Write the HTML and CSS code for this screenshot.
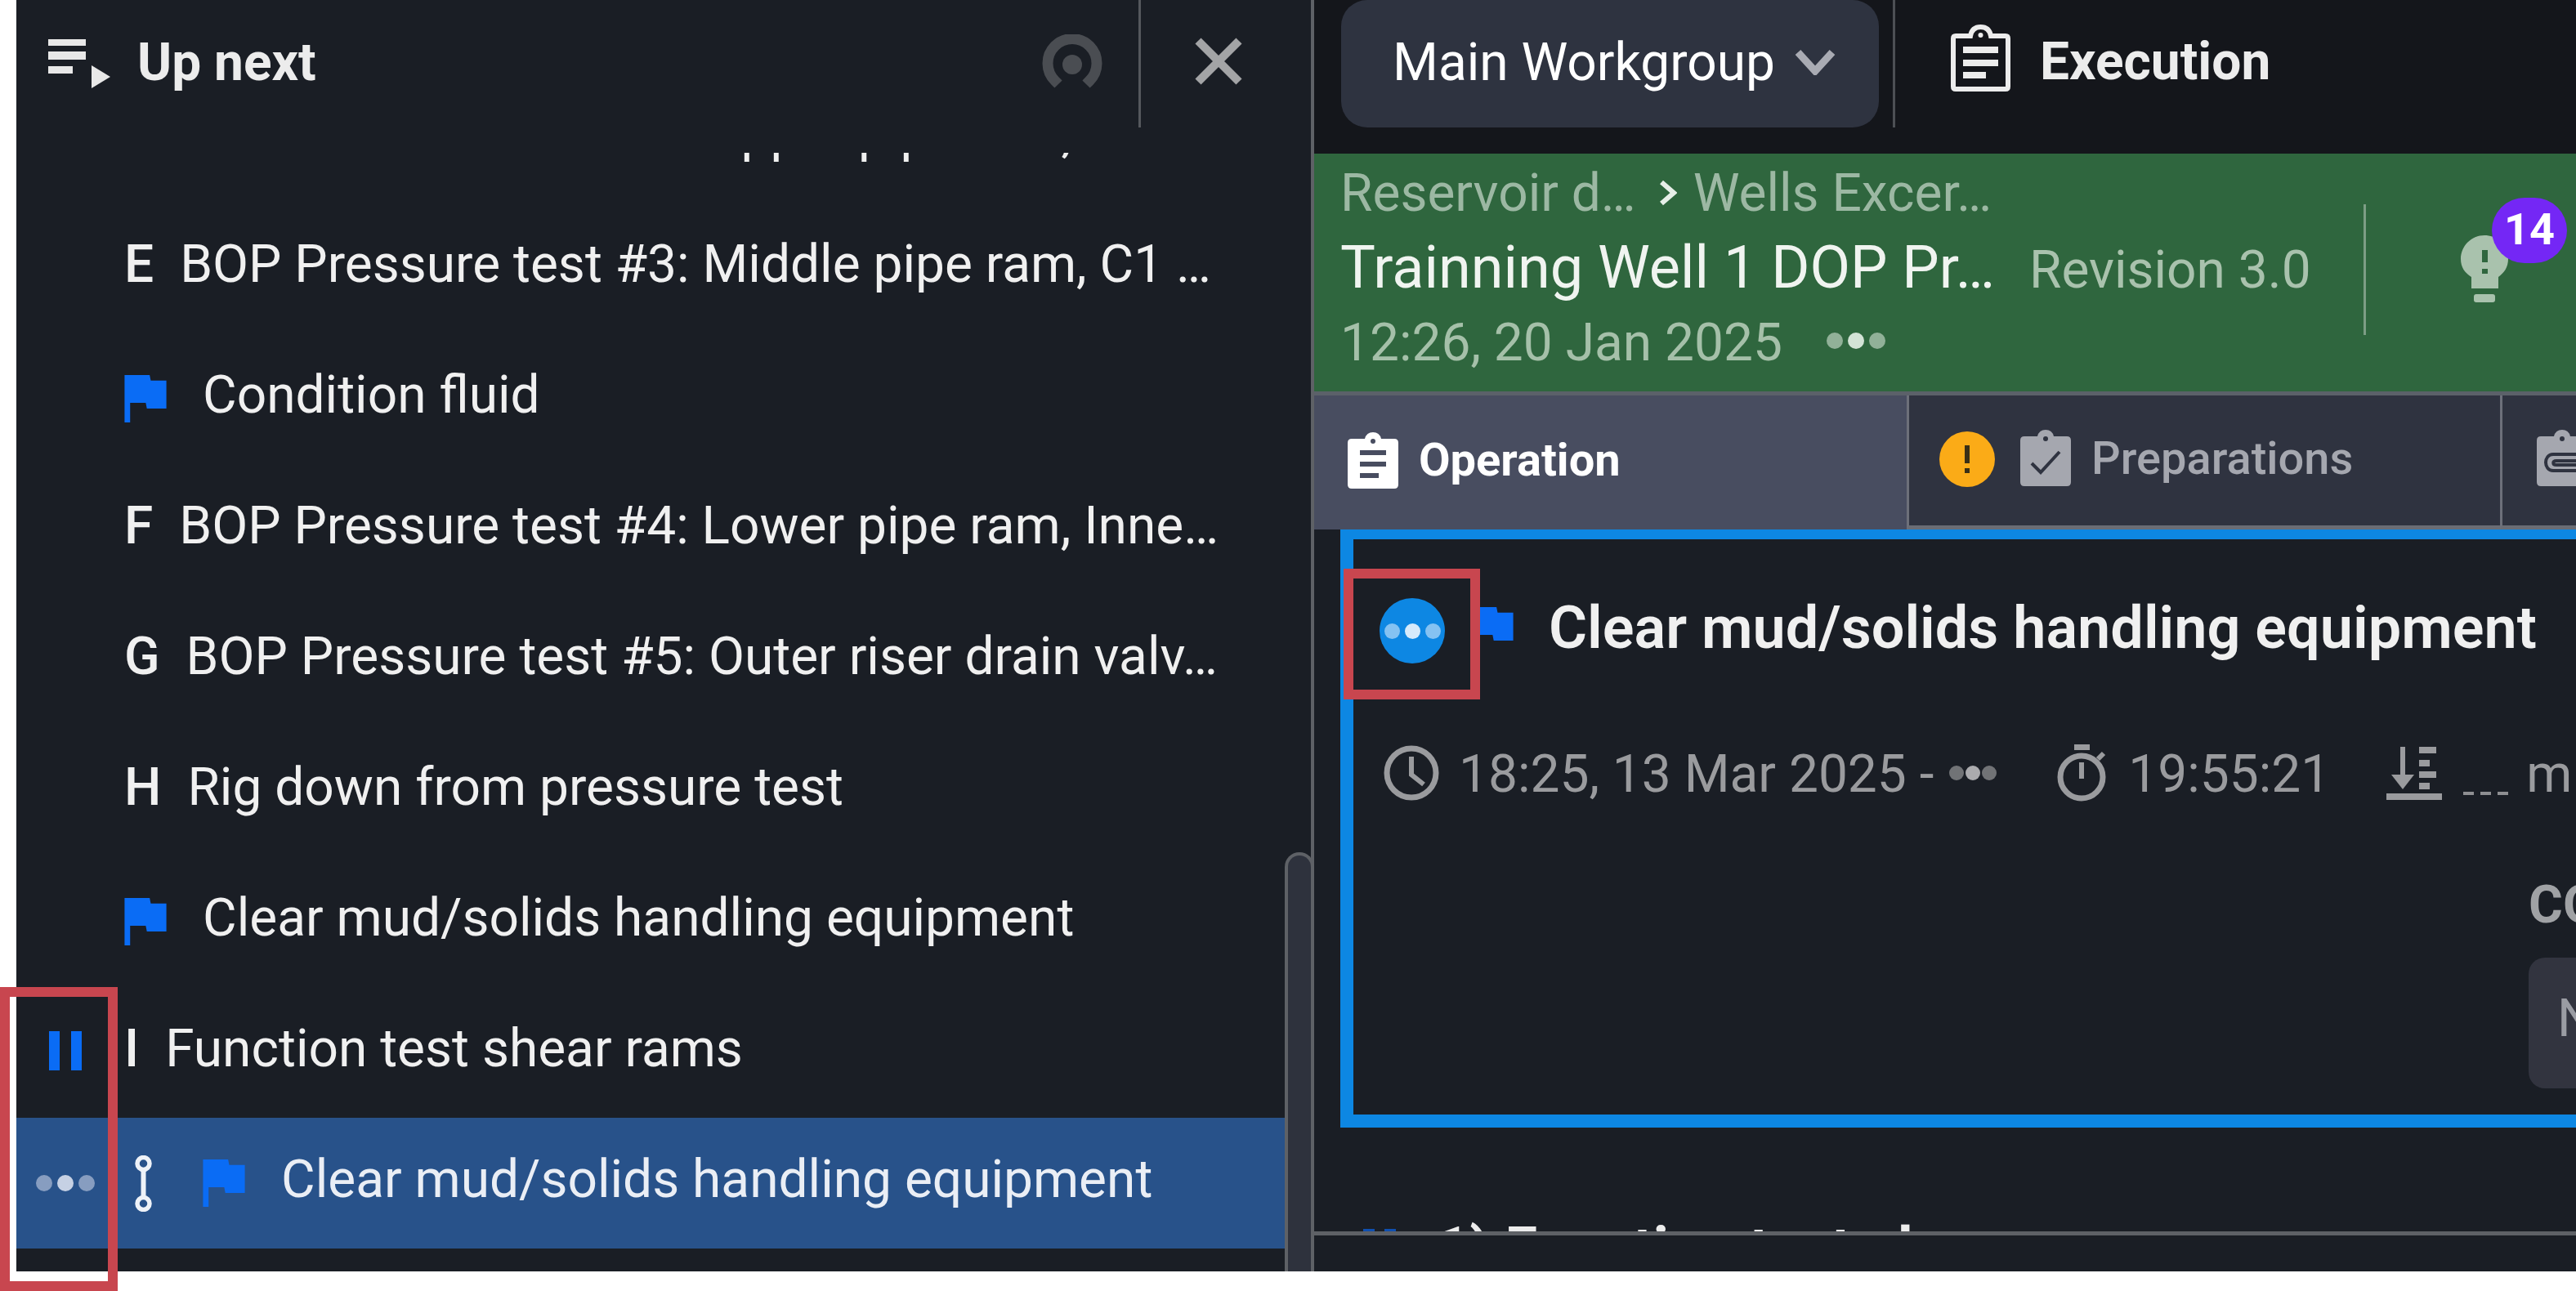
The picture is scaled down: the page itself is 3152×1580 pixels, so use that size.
FILE: index.html
```html
<!DOCTYPE html>
<html lang="en">
<head>
  <meta charset="UTF-8">
  <title>Up next - Execution</title>
  <link rel="stylesheet" href="styles.css">
</head>
<body>
  <div class="page">
    <aside class="queue">
      <div class="queue-head">
        <svg class="icon-queue" viewBox="0 0 76 60"><rect x="0" y="0" width="46" height="8" fill="#e8e8e8"/><rect x="0" y="15" width="46" height="10" fill="#e8e8e8"/><rect x="0" y="33" width="30" height="9" fill="#e8e8e8"/><path d="M53 32 L76 46 L53 60 Z" fill="#e8e8e8"/></svg>
        <span class="queue-title">Up next</span>
        <svg class="icon-radar" viewBox="0 0 74 66"><path d="M20 61 L16 57 A30 30 0 1 1 58 57 L54 61" fill="none" stroke="#4a4d52" stroke-width="13"/><circle cx="37" cy="37" r="12" fill="#4a4d52"/></svg>
        <div class="queue-close">
          <svg class="icon-close" viewBox="0 0 58 58"><path d="M4 4 L54 54 M54 4 L4 54" stroke="#a3a4a6" stroke-width="10"/></svg>
        </div>
      </div>

      <div class="queue-list">
        <div class="row"><div class="gutter"></div><span class="row-letter">D</span><span class="row-text">BOP Pressure test #2: Upper pipe ram, …</span></div>
        <div class="row"><div class="gutter"></div><span class="row-letter">E</span><span class="row-text">BOP Pressure test #3: Middle pipe ram, C1 …</span></div>
        <div class="row"><div class="gutter"></div><svg class="flag flag-row" viewBox="5 4 15 17"><path d="M14.4 6L14 4H5v17h2v-7h5.6l.4 2h7V6z"/></svg><span class="row-text">Condition fluid</span></div>
        <div class="row"><div class="gutter"></div><span class="row-letter">F</span><span class="row-text">BOP Pressure test #4: Lower pipe ram, Inne…</span></div>
        <div class="row"><div class="gutter"></div><span class="row-letter">G</span><span class="row-text">BOP Pressure test #5: Outer riser drain valv…</span></div>
        <div class="row"><div class="gutter"></div><span class="row-letter">H</span><span class="row-text">Rig down from pressure test</span></div>
        <div class="row"><div class="gutter"></div><svg class="flag flag-row" viewBox="5 4 15 17"><path d="M14.4 6L14 4H5v17h2v-7h5.6l.4 2h7V6z"/></svg><span class="row-text">Clear mud/solids handling equipment</span></div>
        <div class="row">
          <div class="gutter"><div class="pause"><i></i><i></i></div></div>
          <span class="row-letter">I</span><span class="row-text">Function test shear rams</span>
        </div>
        <div class="row row-active">
          <div class="gutter"><div class="dots dots-row"><i></i><i></i><i></i></div></div>
          <svg class="icon-link" viewBox="0 0 21 69"><circle cx="10.5" cy="10" r="7.5" fill="none" stroke="#eef2f8" stroke-width="5.5"/><circle cx="10.5" cy="59" r="7.5" fill="none" stroke="#eef2f8" stroke-width="5.5"/><path d="M10.5 18 V51" stroke="#eef2f8" stroke-width="6"/></svg>
          <svg class="flag flag-active" viewBox="5 4 15 17"><path d="M14.4 6L14 4H5v17h2v-7h5.6l.4 2h7V6z"/></svg>
          <span class="row-text">Clear mud/solids handling equipment</span>
        </div>
      </div>
      <div class="scrollbar"></div>
    </aside>

    <main class="main">
      <div class="topbar">
        <div class="chip">
          <span class="chip-label">Main Workgroup</span>
          <svg class="icon-chevron" viewBox="0 0 50 32"><path d="M4 4 L25 27 L46 4" fill="none" stroke="#a9abb3" stroke-width="9"/></svg>
        </div>
        <div class="topbar-sep"></div>
        <svg class="icon-exec" viewBox="0 0 73 82"><path d="M6 14 H24 Q26 3 36.5 3 Q47 3 49 14 H67 Q70 14 70 17 V76 Q70 79 67 79 H6 Q3 79 3 76 V17 Q3 14 6 14 Z" fill="#14161b" stroke="#ececec" stroke-width="6"/><circle cx="36.5" cy="13" r="3" fill="#ececec"/><rect x="15" y="27" width="43" height="8" fill="#ececec"/><rect x="15" y="43" width="43" height="8" fill="#ececec"/><rect x="15" y="58" width="28" height="8" fill="#ececec"/></svg>
        <span class="topbar-title">Execution</span>
      </div>

      <div class="band">
        <div class="band-info">
          <div class="crumbs">
            <span>Reservoir d…</span>
            <svg class="icon-crumb" viewBox="0 0 22 32"><path d="M3 3 L18 16 L3 29" fill="none" stroke="#e7efe8" stroke-width="6"/></svg>
            <span>Wells Excer…</span>
          </div>
          <div class="band-title">
            <span class="title-text">Trainning Well 1 DOP Pr…</span>
            <span class="revision">Revision 3.0</span>
          </div>
          <div class="band-date">
            <span>12:26, 20 Jan 2025</span>
            <div class="dots dots-band"><i></i><i></i><i></i></div>
          </div>
        </div>
        <div class="band-side">
          <svg class="icon-bulb" viewBox="0 0 58 82"><path d="M29 0 C45 0 58 13 58 29 C58 39 53 46 46 51 V65 H13 V51 C5 46 0 39 0 29 C0 13 13 0 29 0 Z" fill="#a9c2ad"/><rect x="26" y="18" width="7" height="15" fill="#2f663e"/><rect x="26" y="41" width="7" height="6" fill="#2f663e"/><rect x="16" y="72" width="26" height="10" rx="3" fill="#a9c2ad"/></svg>
          <span class="badge">14</span>
        </div>
      </div>

      <div class="tabs">
        <div class="tab tab-active">
          <svg class="icon-tab" viewBox="0 0 62 69"><path d="M5 8 H21 Q23 0 31 0 Q39 0 41 8 H57 Q62 8 62 13 V64 Q62 69 57 69 H5 Q0 69 0 64 V13 Q0 8 5 8 Z" fill="#fff"/><circle cx="31" cy="11" r="3" fill="#484d60"/><rect x="15" y="22" width="32" height="6" fill="#484d60"/><rect x="15" y="36" width="32" height="6" fill="#484d60"/><rect x="15" y="50" width="23" height="6" fill="#484d60"/></svg>
          <span class="tab-label">Operation</span>
        </div>
        <div class="tab tab-prep">
          <svg class="icon-warn" viewBox="0 0 68 68"><circle cx="34" cy="34" r="34" fill="#fbab17"/><rect x="31" y="17" width="6" height="22" fill="#3a2f16"/><rect x="31" y="45" width="6" height="6" fill="#3a2f16"/></svg>
          <svg class="icon-tab" viewBox="0 0 62 69"><path d="M5 8 H21 Q23 0 31 0 Q39 0 41 8 H57 Q62 8 62 13 V64 Q62 69 57 69 H5 Q0 69 0 64 V13 Q0 8 5 8 Z" fill="#a5a7af"/><circle cx="31" cy="11" r="3" fill="#2f3340"/><path d="M14 41 L25 52 L48 27" fill="none" stroke="#2f3340" stroke-width="4"/></svg>
          <span class="tab-label">Preparations</span>
        </div>
        <div class="tab tab-clip">
          <svg class="icon-tab" viewBox="0 0 62 69"><path d="M5 8 H21 Q23 0 31 0 Q39 0 41 8 H57 Q62 8 62 13 V64 Q62 69 57 69 H5 Q0 69 0 64 V13 Q0 8 5 8 Z" fill="#a5a7af"/><circle cx="31" cy="11" r="3" fill="#2f3340"/><path d="M54 30 H20 C8 30 8 50 20 50 H50 C58 50 58 38 50 38 H24 C19 38 19 43 24 43 H48" fill="none" stroke="#2f3340" stroke-width="4"/></svg>
        </div>
      </div>

      <section class="op-box">
        <div class="op-head">
          <div class="op-status"><div class="dots dots-status"><i></i><i></i><i></i></div></div>
          <svg class="flag flag-op" viewBox="5 4 15 17"><path d="M14.4 6L14 4H5v17h2v-7h5.6l.4 2h7V6z"/></svg>
          <h2 class="op-title">Clear mud/solids handling equipment</h2>
        </div>
        <div class="op-meta">
          <svg class="icon-clock" viewBox="0 0 68 68"><circle cx="34" cy="34" r="30" fill="none" stroke="#9a9b9e" stroke-width="7"/><path d="M34 14 V36 L49 48" fill="none" stroke="#9a9b9e" stroke-width="6"/></svg>
          <span class="meta-time">18:25, 13 Mar 2025 -</span>
          <div class="dots dots-meta"><i></i><i></i><i></i></div>
          <svg class="icon-timer" viewBox="0 0 63 70"><rect x="22" y="0" width="19" height="7" fill="#9a9b9e"/><circle cx="31" cy="40" r="26" fill="none" stroke="#9a9b9e" stroke-width="7"/><rect x="28" y="22" width="6" height="20" fill="#9a9b9e"/><path d="M51 18 L58 11" stroke="#9a9b9e" stroke-width="6"/></svg>
          <span class="meta-duration">19:55:21</span>
          <svg class="icon-depth" viewBox="0 0 68 65"><rect x="0" y="57" width="68" height="8" fill="#9a9b9e"/><path d="M20 0 V38" stroke="#9a9b9e" stroke-width="6"/><path d="M6 34 H34 L20 52 Z" fill="#9a9b9e"/><rect x="40" y="0" width="21" height="8" fill="#9a9b9e"/><rect x="40" y="16" width="13" height="8" fill="#9a9b9e"/><rect x="40" y="30" width="21" height="8" fill="#9a9b9e"/><rect x="40" y="44" width="13" height="8" fill="#9a9b9e"/></svg>
          <svg class="icon-dashes" viewBox="0 0 55 4"><rect x="0" y="0" width="13" height="4" fill="#8e8f92"/><rect x="21" y="0" width="13" height="4" fill="#8e8f92"/><rect x="42" y="0" width="13" height="4" fill="#8e8f92"/></svg>
          <span class="meta-unit">m</span>
        </div>
        <div class="op-form">
          <div class="form-label">COMMENT</div>
          <div class="form-input">No comment</div>
        </div>
      </section>

      <div class="next-step">
        <svg class="icon-next" viewBox="0 0 40 12"><rect x="0" y="9" width="14" height="3" fill="#0f4fb0"/><rect x="26" y="9" width="14" height="3" fill="#0f4fb0"/></svg>
        <span class="next-title">1) Function test al</span>
      </div>
    </main>

    <div class="mark mark-queue"></div>
    <div class="mark mark-status"></div>
  </div>
</body>
</html>
```

FILE: styles.css
```css
* { box-sizing: border-box; }
html, body { margin: 0; padding: 0; background: #fff; }
body { font-family: Roboto, "Liberation Sans", sans-serif; overflow: hidden; }
svg { display: block; flex-shrink: 0; }

.page {
  position: relative;
  display: flex;
  width: 3152px;
  height: 1580px;
  padding: 0 0 24px 20px;
}

/* left column */
.queue {
  position: relative;
  display: flex;
  flex-direction: column;
  width: 1584px;
  flex-shrink: 0;
  background: #1a1e25;
}
.queue-head {
  display: flex;
  align-items: center;
  height: 156px;
  flex-shrink: 0;
  padding-left: 39px;
}
.icon-queue { width: 76px; height: 60px; }
.queue-title {
  margin-left: 33px;
  padding-bottom: 4px;
  font-size: 64px;
  font-weight: 700;
  color: #ececec;
}
.icon-radar { width: 74px; height: 66px; margin-left: auto; margin-top: -6px; }
.queue-close {
  display: flex;
  align-items: center;
  width: 211px;
  height: 156px;
  margin-left: 44px;
  padding-left: 66px;
  border-left: 3px solid #55585d;
}
.icon-close { width: 58px; height: 58px; margin-top: -6px; }

.queue-list {
  display: flex;
  flex-direction: column;
  justify-content: flex-end;
  flex: 1;
  min-height: 0;
  margin-top: 31px;
  padding: 0 32px 28px 0;
  overflow: hidden;
}
.row {
  display: flex;
  align-items: center;
  height: 160px;
  flex-shrink: 0;
  font-size: 64px;
  color: #f0f0f0;
  white-space: nowrap;
}
.gutter {
  display: flex;
  align-items: center;
  justify-content: center;
  width: 120px;
  flex-shrink: 0;
  margin-right: 12px;
}
.row-letter { font-weight: 500; margin-right: 32px; padding-bottom: 10px; }
.row-text { padding-bottom: 10px; }
.row-active { background: #28528a; color: #eaeef5; }
.flag { fill: #0a6cf5; width: 52px; height: 58px; }
.flag-row { margin-right: 44px; }
.flag-active { margin-left: 62px; margin-right: 44px; }
.icon-link { width: 21px; height: 69px; margin-left: 13px; }

.pause { display: flex; gap: 14px; margin-bottom: 4px; }
.pause i { display: block; width: 13px; height: 48px; background: #0a6cf5; }

.dots { display: flex; gap: 6px; }
.dots i {
  display: block;
  width: 20px;
  height: 20px;
  border-radius: 50%;
  background: currentColor;
  opacity: 0.6;
}
.dots i:nth-child(2) { opacity: 1; }
.dots-row { color: #c6d1e4; }
.dots-band { color: #d3e3d6; margin-left: 54px; margin-top: -4px; }
.dots-status { color: #d6eafb; }
.dots-status i { width: 19px; height: 19px; }
.dots-meta { color: #ababae; margin-left: 19px; gap: 2px; }
.dots-meta i { width: 18px; height: 18px; }

.scrollbar {
  position: absolute;
  top: 1043px;
  right: -4px;
  bottom: 0;
  width: 36px;
  background: #2e323d;
  border: 4px solid #5e6166;
  border-bottom: 0;
  border-radius: 18px 18px 0 0;
}

/* right column */
.main {
  flex: 1;
  min-width: 0;
  display: flex;
  flex-direction: column;
  border-left: 4px solid #5e6166;
  background: #1a1e25;
  overflow: hidden;
}
.topbar {
  display: flex;
  align-items: flex-start;
  height: 188px;
  flex-shrink: 0;
  background: #14161b;
}
.chip {
  display: flex;
  align-items: center;
  width: 658px;
  height: 156px;
  margin-left: 33px;
  padding-left: 63px;
  border-radius: 32px;
  background: #2e3340;
}
.chip-label { font-size: 64px; color: #fff; padding-bottom: 4px; white-space: nowrap; }
.icon-chevron { width: 50px; height: 32px; margin-left: 24px; margin-top: -4px; }
.topbar-sep { width: 3px; height: 156px; margin-left: 17px; background: #4d5055; }
.icon-exec { width: 73px; height: 82px; margin-left: 68px; margin-top: 30px; }
.topbar-title {
  margin-left: 36px;
  font-size: 64px;
  font-weight: 700;
  line-height: 152px;
  color: #ececec;
}

.band {
  display: flex;
  height: 296px;
  flex-shrink: 0;
  padding-left: 32px;
  background: #2f663e;
  border-bottom: 5px solid #5b6169;
}
.band-info { padding-top: 12px; white-space: nowrap; }
.crumbs {
  display: flex;
  align-items: center;
  height: 72px;
  font-size: 64px;
  color: #9cb8a3;
}
.icon-crumb { width: 22px; height: 32px; margin: 0 20px 0 28px; }
.band-title { display: flex; align-items: baseline; height: 112px; line-height: 112px; }
.title-text { font-size: 72px; color: #f0f4f0; }
.revision { font-size: 64px; color: #a9c2ad; margin-left: 42px; }
.band-date {
  display: flex;
  align-items: center;
  height: 70px;
  font-size: 64px;
  color: #a5c0a9;
}
.band-side {
  position: relative;
  width: 260px;
  height: 160px;
  margin-left: auto;
  margin-top: 62px;
  padding: 38px 0 0 116px;
  border-left: 3px solid #7d9d85;
}
.icon-bulb { width: 58px; height: 82px; }
.badge {
  position: absolute;
  top: -8px;
  left: 154px;
  width: 92px;
  height: 80px;
  border-radius: 40px;
  background: #7427f5;
  color: #fff;
  font-size: 54px;
  font-weight: 700;
  line-height: 78px;
  text-align: center;
}

.tabs { display: flex; height: 164px; flex-shrink: 0; }
.tab {
  display: flex;
  align-items: center;
  flex-shrink: 0;
  background: #2f3340;
  border-left: 3px solid #6d707a;
  border-bottom: 5px solid #6a6d75;
}
.tab-active {
  width: 725px;
  padding-left: 41px;
  background: #484d60;
  border-left: 0;
  border-bottom: 0;
}
.tab-prep { width: 726px; padding-left: 37px; }
.tab-clip { flex: 1; padding-left: 42px; }
.icon-tab { width: 62px; height: 69px; margin-top: -6px; }
.icon-warn { width: 68px; height: 68px; margin-top: -4px; margin-right: 31px; }
.tab-label {
  margin-left: 25px;
  padding-bottom: 6px;
  font-size: 56px;
  font-weight: 500;
  color: #a5a7af;
  white-space: nowrap;
}
.tab-active .tab-label { font-weight: 700; color: #fff; }

.op-box {
  width: 2400px;
  height: 732px;
  flex-shrink: 0;
  margin-left: 32px;
  padding: 72px 0 0 32px;
  border: solid #0d87e3;
  border-width: 12px 16px 16px 16px;
}
.op-head { display: flex; align-items: center; height: 80px; }
.op-status {
  display: flex;
  align-items: center;
  justify-content: center;
  width: 80px;
  height: 80px;
  border-radius: 50%;
  background: #0d87e3;
}
.flag-op { margin-left: 32px; }
.op-title {
  margin: 0 0 0 43px;
  padding-bottom: 8px;
  font-size: 72px;
  font-weight: 600;
  color: #f0f0f0;
  white-space: nowrap;
}
.op-meta {
  display: flex;
  align-items: center;
  height: 68px;
  margin-top: 100px;
  padding-left: 5px;
  font-size: 64px;
  color: #9a9b9e;
  white-space: nowrap;
}
.icon-clock { width: 68px; height: 68px; }
.meta-time { margin-left: 24px; margin-top: 2px; }
.icon-timer { width: 63px; height: 70px; margin-left: 73px; }
.meta-duration { margin-left: 25px; margin-top: 2px; }
.icon-depth { width: 68px; height: 65px; margin-left: 69px; }
.icon-dashes { width: 55px; height: 4px; margin-left: 26px; margin-top: 50px; }
.meta-unit { margin-left: 22px; margin-top: 2px; }
.op-form { margin: 92px 0 0 1406px; width: 800px; }
.form-label { height: 72px; line-height: 72px; font-size: 64px; font-weight: 700; color: #a0a2a5; }
.form-input {
  height: 160px;
  margin-top: 28px;
  padding-left: 35px;
  border-radius: 20px;
  background: #32343f;
  font-size: 64px;
  line-height: 150px;
  color: #9a9ca3;
}

.next-step {
  display: flex;
  align-items: flex-start;
  height: 132px;
  flex-shrink: 0;
  padding: 104px 0 0 60px;
  border-bottom: 5px solid #5e6166;
  overflow: hidden;
}
.icon-next { width: 40px; height: 12px; margin-top: 11px; }
.next-title {
  margin-left: 49px;
  font-size: 72px;
  font-weight: 700;
  line-height: 90px;
  color: #ececec;
  white-space: nowrap;
}

/* red call-outs drawn on top of the capture */
.mark { position: absolute; border: 12px solid #c8464f; }
.mark-queue { left: 0; top: 1208px; width: 144px; height: 372px; }
.mark-status { left: 1644px; top: 696px; width: 167px; height: 160px; }
```
